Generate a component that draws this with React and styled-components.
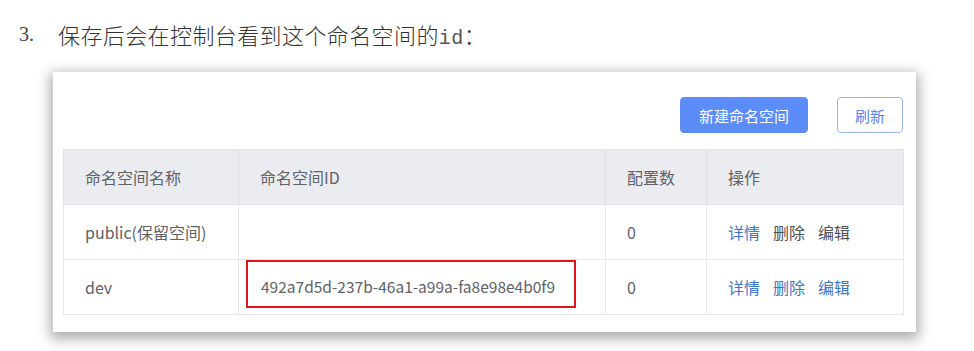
import React from "react";
import styled, { createGlobalStyle } from "styled-components";

const GlobalStyle = createGlobalStyle`
  body {
    margin: 0;
    background: #ffffff;
    font-family: "Noto Sans CJK SC", "Noto Sans", sans-serif;
  }
`;

const Page = styled.div`
  width: 974px;
  height: 351px;
  overflow: hidden;
  background: #fff;
`;

const Step = styled.div`
  display: flex;
  align-items: center;
  height: 44px;
  padding: 12px 0 0 19px;
  color: #333;
  font-size: 22px;
`;

const StepNum = styled.span`
  width: 39px;
  font-family: "Liberation Serif", serif;
  font-size: 20px;
  color: #444;
`;

const StepText = styled.span`
  font-family: "Noto Sans CJK SC", sans-serif;
  font-weight: 300;
  letter-spacing: 0.4px;
`;

const Mono = styled.span`
  font-family: "Liberation Mono", monospace;
  font-size: 20px;
  color: #555;
`;

const Card = styled.div`
  margin: 16px 0 0 53px;
  width: 863px;
  box-sizing: border-box;
  padding: 25px 13px 17px 10px;
  background: #fff;
  box-shadow: 0 4px 12px 3px rgba(0, 0, 0, 0.32);
`;

const Toolbar = styled.div`
  display: flex;
  justify-content: flex-end;
  gap: 29px;
  margin-bottom: 16px;
`;

const Button = styled.button`
  height: 36px;
  width: ${(p) => p.$w}px;
  border-radius: 4px;
  font-family: "Noto Sans CJK SC", sans-serif;
  font-size: 15px;
  cursor: pointer;
  border: 1px solid ${(p) => (p.$primary ? "#5b8cf7" : "#9ab4ee")};
  background: ${(p) => (p.$primary ? "#5b8cf7" : "#fff")};
  color: ${(p) => (p.$primary ? "#fff" : "#5d86e8")};
`;

const Table = styled.table`
  width: 840px;
  border-collapse: collapse;
  table-layout: fixed;
  border: 1px solid #e4e6ea;
  font-size: 16px;
  color: #606266;
`;

const Th = styled.th`
  height: 54px;
  background: #ebecf0;
  font-weight: 400;
  text-align: left;
  padding: 0 0 0 21px;
  border: 1px solid #dfe1e6;
`;

const Td = styled.td`
  height: 54px;
  padding: 0 0 0 21px;
  border: 1px solid #e6e8ec;
  vertical-align: middle;
`;

const IdCell = styled.td`
  height: 54px;
  padding: 0 0 0 7px;
  border: 1px solid #e6e8ec;
  vertical-align: top;
`;

const Highlight = styled.div`
  width: 330px;
  height: 48px;
  box-sizing: border-box;
  border: 2px solid #e3141d;
  padding: 6px 0 0 13px;
  line-height: 36px;
  font-size: 15.5px;
`;

const Actions = styled.div`
  display: flex;
  gap: 13px;
`;

const Action = styled.span`
  color: ${(p) => (p.$muted ? "#505256" : "#3f78c4")};
`;

export default function App() {
  return (
    <Page>
      <GlobalStyle />
      <Step>
        <StepNum>3.</StepNum>
        <StepText>
          保存后会在控制台看到这个命名空间的<Mono>id</Mono>：
        </StepText>
      </Step>
      <Card>
        <Toolbar>
          <Button $primary $w={128}>新建命名空间</Button>
          <Button $w={66}>刷新</Button>
        </Toolbar>
        <Table>
          <colgroup>
            <col style={{ width: 175 }} />
            <col style={{ width: 367 }} />
            <col style={{ width: 101 }} />
            <col style={{ width: 197 }} />
          </colgroup>
          <thead>
            <tr>
              <Th>命名空间名称</Th>
              <Th>命名空间ID</Th>
              <Th>配置数</Th>
              <Th>操作</Th>
            </tr>
          </thead>
          <tbody>
            <tr>
              <Td>public(保留空间)</Td>
              <Td />
              <Td>0</Td>
              <Td>
                <Actions>
                  <Action>详情</Action>
                  <Action $muted>删除</Action>
                  <Action $muted>编辑</Action>
                </Actions>
              </Td>
            </tr>
            <tr>
              <Td>dev</Td>
              <IdCell>
                <Highlight>492a7d5d-237b-46a1-a99a-fa8e98e4b0f9</Highlight>
              </IdCell>
              <Td>0</Td>
              <Td>
                <Actions>
                  <Action>详情</Action>
                  <Action>删除</Action>
                  <Action>编辑</Action>
                </Actions>
              </Td>
            </tr>
          </tbody>
        </Table>
      </Card>
    </Page>
  );
}
